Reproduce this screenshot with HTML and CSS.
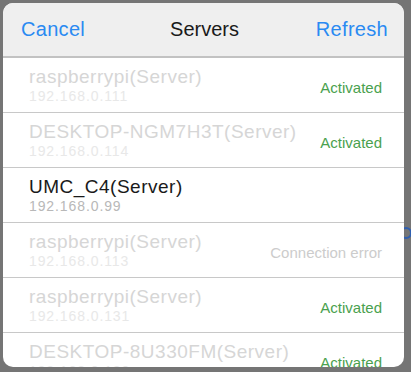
FILE: index.html
```html
<!DOCTYPE html>
<html lang="en">
<head>
  <meta charset="UTF-8" />
  <title>Servers</title>
  <link rel="stylesheet" href="styles.css">
</head>
<body>
  <span class="peek"></span>

  <div class="sheet">
    <header class="bar">
      <a class="bar-btn">Cancel</a>
      <span class="bar-title">Servers</span>
      <a class="bar-btn right">Refresh</a>
    </header>

    <ul class="server-list">
      <li class="server off">
        <div class="info">
          <div class="name">raspberrypi(Server)</div>
          <div class="ip">192.168.0.111</div>
        </div>
        <span class="state ok">Activated</span>
      </li>
      <li class="server off">
        <div class="info">
          <div class="name">DESKTOP-NGM7H3T(Server)</div>
          <div class="ip">192.168.0.114</div>
        </div>
        <span class="state ok">Activated</span>
      </li>
      <li class="server">
        <div class="info">
          <div class="name">UMC_C4(Server)</div>
          <div class="ip">192.168.0.99</div>
        </div>
      </li>
      <li class="server off">
        <div class="info">
          <div class="name">raspberrypi(Server)</div>
          <div class="ip">192.168.0.113</div>
        </div>
        <span class="state err">Connection error</span>
      </li>
      <li class="server off">
        <div class="info">
          <div class="name">raspberrypi(Server)</div>
          <div class="ip">192.168.0.131</div>
        </div>
        <span class="state ok">Activated</span>
      </li>
      <li class="server off">
        <div class="info">
          <div class="name">DESKTOP-8U330FM(Server)</div>
          <div class="ip">192.168.0.120</div>
        </div>
        <span class="state ok">Activated</span>
      </li>
    </ul>
  </div>
</body>
</html>
```

FILE: styles.css
```css
body {
  margin: 0;
  font-family: "Liberation Sans", Arial, sans-serif;
  background: #757575;
  height: 372px;
  overflow: hidden;
  position: relative;
}

/* edge of a control behind the sheet */
.peek {
  position: absolute;
  left: 400px;
  top: 227px;
  width: 8px;
  height: 8px;
  border: 2px solid #2f5fb0;
  border-radius: 50%;
}

.sheet {
  position: relative;
  margin: 3px;
  width: 401px;
  height: 364px;
  border-radius: 10px;
  overflow: hidden;
  background: white;
}

.bar {
  height: 53px;
  background: #efefef;
  border-bottom: 2px solid #c2c2c2;
  display: grid;
  grid-template-columns: 1fr auto 1fr;
  align-items: center;
  padding: 0 16px 0 18px;
  font-size: 20px;
}

.bar-btn {
  color: #2a8af2;
  cursor: pointer;
  letter-spacing: 0.3px;
}

.bar-btn.right {
  text-align: right;
}

.bar-title {
  color: #1a1a1a;
}

.server-list {
  list-style: none;
  margin: 0;
  padding: 0;
}

.server {
  height: 54px;
  border-bottom: 1px solid #c8c8c8;
  display: flex;
  align-items: center;
  justify-content: space-between;
  padding: 0 22px 0 26px;
}

.name {
  font-size: 19px;
  color: #1a1a1a;
  line-height: 22px;
  letter-spacing: 0.5px;
}

.ip {
  font-size: 14px;
  color: #b8b8b8;
  line-height: 16px;
  letter-spacing: 0.9px;
}

.server.off .name {
  color: #d6d6d6;
}

.server.off .ip {
  color: #e8e8e8;
}

.state {
  font-size: 15px;
  margin-top: 5px;
}

.state.ok {
  color: #4aa14e;
}

.state.err {
  color: #cccccc;
}
```
